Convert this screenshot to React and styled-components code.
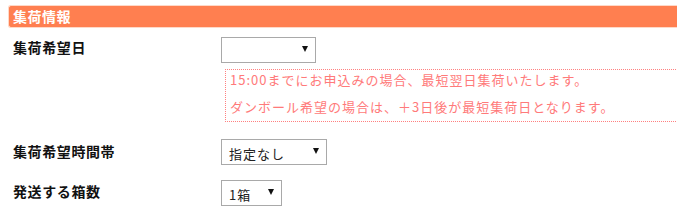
import React from "react";
import styled, { createGlobalStyle } from "styled-components";

const Global = createGlobalStyle`
  html, body { margin: 0; padding: 0; background: #fff; }
  body { font-family: "Liberation Sans", "Noto Sans CJK JP", sans-serif; }
`;

const Wrap = styled.div`
  padding: 5px 0 0 8px;
  width: 669px;
  overflow: hidden;
`;

const Header = styled.div`
  height: 21px;
  width: 700px;
  background: #ff7f50;
  border: 1px solid #ffd9c8;
  border-right: none;
  border-radius: 3px 0 0 3px;
  color: #fff;
  font-family: "Noto Sans CJK JP", sans-serif;
  font-weight: 700;
  font-size: 14px;
  letter-spacing: 0.5px;
  line-height: 21px;
  padding-left: 4px;
  box-sizing: content-box;
`;

const Row = styled.div`
  display: grid;
  grid-template-columns: 208px 1fr;
  padding-left: 5px;
  margin-top: ${(p) => p.$mt}px;
`;

const Label = styled.div`
  font-family: "Noto Sans CJK JP", sans-serif;
  font-weight: 700;
  font-size: 14px;
  letter-spacing: 0.6px;
  color: #111;
  line-height: 20px;
  padding-top: ${(p) => p.$pt || 0}px;
`;

const Field = styled.div`
  display: flex;
  flex-direction: column;
  align-items: flex-start;
`;

const Select = styled.div`
  box-sizing: border-box;
  width: ${(p) => p.$w}px;
  height: 26px;
  border: 1px solid #a9a9a9;
  background: #fff;
  display: flex;
  align-items: center;
  justify-content: space-between;
  padding: 2px 7px 0 7px;
  font-family: "Noto Sans CJK JP", sans-serif;
  font-size: 13px;
  letter-spacing: 1px;
  color: #222;
`;

const Arrow = styled.span`
  width: 0;
  height: 0;
  border-left: 3.5px solid transparent;
  border-right: 3.5px solid transparent;
  border-top: 6px solid #111;
  margin-top: -4px;
`;

const Note = styled.div`
  margin: 6px 0 0 4px;
  width: 520px;
  background-image:
    linear-gradient(90deg, #ff8080 50%, #ffffff 50%),
    linear-gradient(90deg, #ff8080 50%, #ffffff 50%),
    linear-gradient(180deg, #ff8080 50%, #ffffff 50%);
  background-repeat: repeat-x, repeat-x, repeat-y;
  background-size: 2px 1px, 2px 1px, 1px 2px;
  background-position: 0 0, 0 100%, 0 0;
  padding: 1px 0 5px 5px;
  display: flex;
  flex-direction: column;
  gap: 7px;
  color: #ff7a7a;
  font-family: "Noto Sans CJK JP", sans-serif;
  font-size: 13px;
  letter-spacing: 1px;
  line-height: 20px;
`;

export default function App() {
  return (
    <>
      <Global />
      <Wrap>
        <Header>集荷情報</Header>
        <Row $mt={9}>
          <Label $pt={0}>集荷希望日</Label>
          <Field>
            <Select $w={95}>
              <span></span>
              <Arrow />
            </Select>
            <Note>
              <div>15:00までにお申込みの場合、最短翌日集荷いたします。</div>
              <div>ダンボール希望の場合は、＋3日後が最短集荷日となります。</div>
            </Note>
          </Field>
        </Row>
        <Row $mt={17}>
          <Label $pt={2}>集荷希望時間帯</Label>
          <Field>
            <Select $w={106}>
              <span>指定なし</span>
              <Arrow />
            </Select>
          </Field>
        </Row>
        <Row $mt={15}>
          <Label $pt={1}>発送する箱数</Label>
          <Field>
            <Select $w={61}>
              <span>1箱</span>
              <Arrow />
            </Select>
          </Field>
        </Row>
      </Wrap>
    </>
  );
}
